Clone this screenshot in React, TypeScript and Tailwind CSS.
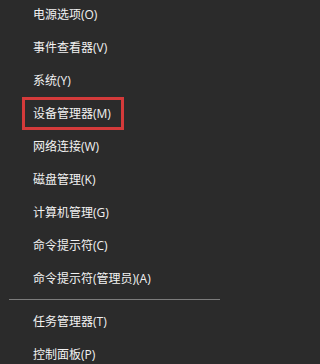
import React from "react";

const items1 = [
  "电源选项(O)",
  "事件查看器(V)",
  "系统(Y)",
  "设备管理器(M)",
  "网络连接(W)",
  "磁盘管理(K)",
  "计算机管理(G)",
  "命令提示符(C)",
  "命令提示符(管理员)(A)",
];
const items2 = ["任务管理器(T)", "控制面板(P)"];

export default function App() {
  return (
    <div
      className="w-full h-screen min-h-[364px] bg-[#2b2b2b] text-[#f2f2f2] text-[12px] overflow-hidden"
      style={{ fontFamily: '"Open Sans", "Noto Sans CJK SC", sans-serif' }}
    >
      <div className="w-[227px] flex flex-col -mt-[2px]">
        {items1.map((t, i) =>
          i === 3 ? (
            <div key={t} className="h-[33px] shrink-0 flex items-center">
              <div className="ml-[22px] w-[102px] h-[33px] border-[3px] border-[#d43a3a] flex items-center pl-[8px] whitespace-nowrap">
                {t}
              </div>
            </div>
          ) : (
            <div key={t} className="h-[33px] shrink-0 flex items-center pl-[33px] whitespace-nowrap">
              {t}
            </div>
          )
        )}
        <div className="h-[10px] shrink-0 flex items-start pt-[4px]">
          <div className="ml-[9px] w-[211px] h-px bg-[#7c7c7c]" />
        </div>
        {items2.map((t) => (
          <div key={t} className="h-[33px] shrink-0 flex items-center pl-[33px] whitespace-nowrap">
            {t}
          </div>
        ))}
      </div>
    </div>
  );
}
